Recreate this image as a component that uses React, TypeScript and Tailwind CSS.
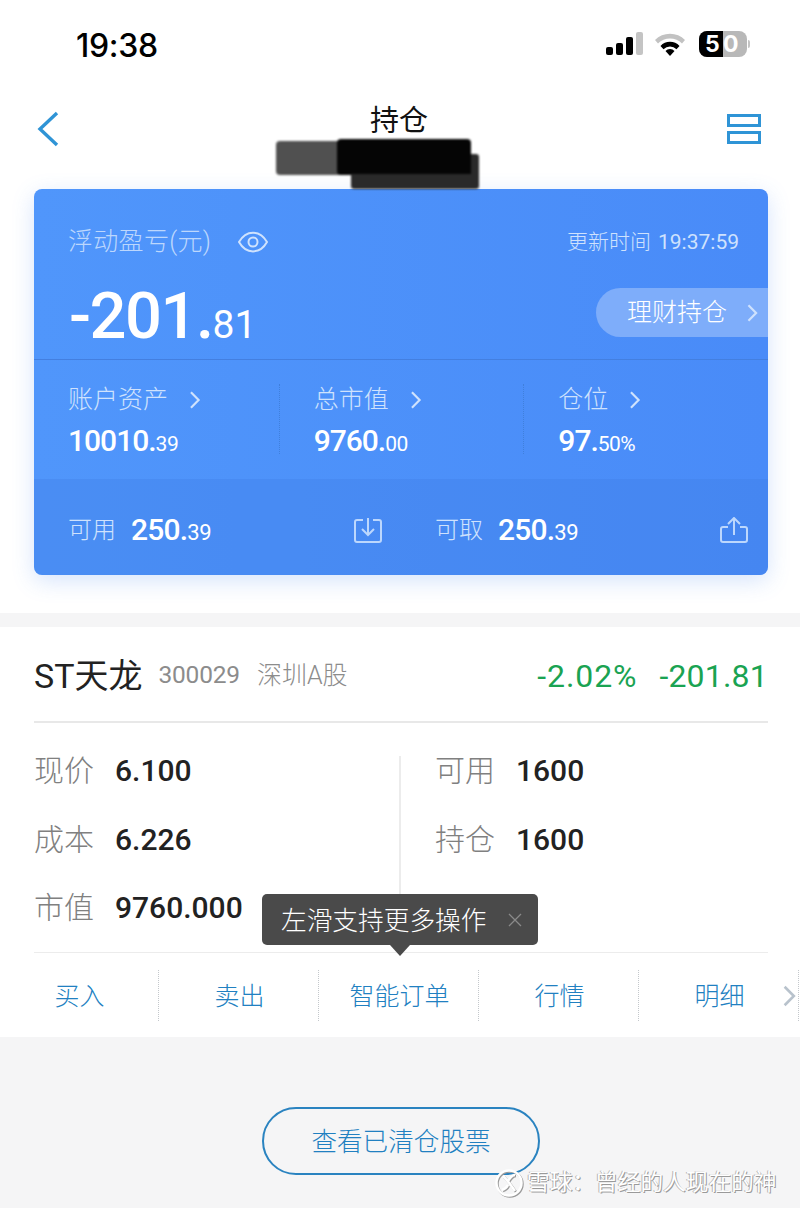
const blueText = 'text-[#2180c1]';

function Chevron({ className }: { className: string }) {
  return (
    <svg viewBox="0 0 12 20" fill="none" stroke="currentColor" strokeWidth="2.4" className={className}>
      <path d="M1.5 1.5 10 10l-8.5 8.5" />
    </svg>
  );
}

function StatusBar() {
  return (
    <div className="flex h-[90px] items-start justify-between pl-[76px] pr-[50px] pt-[27px]">
      <span className="font-['Inter'] text-[32px] font-medium leading-[37px] tracking-[-0.3px] text-black">19:38</span>
      <div className="mt-[4px] flex items-center gap-[10px]">
        <svg width="38" height="24" viewBox="0 0 38 24">
          <rect x="0" y="15" width="7" height="8" rx="2" fill="#000" />
          <rect x="10" y="11" width="7" height="12" rx="2" fill="#000" />
          <rect x="20" y="5" width="7" height="18" rx="2" fill="#000" />
          <rect x="30" y="0" width="7" height="23" rx="2" fill="#c4c4c4" />
        </svg>
        <svg width="32" height="26" viewBox="0 0 32 26">
          <path d="M1 9a21 21 0 0 1 30 0l-3 3.400a17 17 0 0 0-24 0z" fill="#c2c2c2" />
          <path d="M6.500 15a13 13 0 0 1 19 0l-3 3.200a9 9 0 0 0-13 0z" fill="#000" />
          <path d="M11.500 20a6 6 0 0 1 9 0L16 25z" fill="#000" />
        </svg>
        <div className="ml-[3px] flex items-center">
          <div className="flex h-[26px] w-[48px] rounded-[8px] bg-[#b8b8b8] text-[23px] font-bold leading-[26px] text-white">
            <span className="w-[24px] rounded-l-[8px] bg-black pl-[6px] font-['Inter']">5</span>
            <span className="font-['Inter']">0</span>
          </div>
          <div className="ml-[1px] h-[8px] w-[2px] rounded-r bg-[#c4c4c4]" />
        </div>
      </div>
    </div>
  );
}

function NavBar() {
  return (
    <div className="relative flex h-[99px] items-start pl-[37px] pr-[39px]">
      <div className="flex-1">
        <svg width="22" height="36" viewBox="0 0 22 36" fill="none" stroke="#2f94d6" strokeWidth="3.4" className="mt-[21px]">
          <path d="M20 2 3 18l17 16" />
        </svg>
      </div>
      <span className="mt-[12px] text-[29px] leading-[38px] text-[#111]">持仓</span>
      <div className="flex flex-1 justify-end">
        <div className="mt-[24px] flex w-[34px] flex-col gap-[4px]">
          <div className="h-[13px] border-[3.5px] border-[#2f94d6]" />
          <div className="h-[13px] border-[3.5px] border-[#2f94d6]" />
        </div>
      </div>
      {/* 账户名涂抹 */}
      <svg width="206" height="52" viewBox="0 0 206 52" className="absolute left-[275px] top-[48px] blur-[1px]">
        <rect x="1" y="3" width="90" height="34" rx="4" fill="#505050" />
        <rect x="62" y="1" width="134" height="36" rx="4" fill="#050505" />
        <rect x="76" y="16" width="128" height="35" rx="3" fill="#2a2a2a" />
        <rect x="76" y="16" width="120" height="20" fill="#050505" />
      </svg>
    </div>
  );
}

function Amount({ big, small, bigSize, smallSize }: { big: string; small: string; bigSize: string; smallSize: string }) {
  return (
    <span className="font-medium text-white">
      <span className={bigSize}>{big}</span>
      <span className={smallSize}>{small}</span>
    </span>
  );
}

function Stat({ label, big, small, divider }: { label: string; big: string; small: string; divider?: boolean }) {
  return (
    <div className={`h-[70px] pl-[34px] ${divider ? 'border-l border-dotted border-[#3f7fdc]' : ''}`}>
      <div className="flex h-[30px] items-center pt-[2px] text-[25px] font-light leading-[30px] text-[#cfe2fd]">
        <span>{label}</span>
        <Chevron className="ml-[21px] h-[18px] w-[12px] text-[#cfe2fd]" />
      </div>
      <div className="mt-[9px] leading-[36px]">
        <Amount big={big} small={small} bigSize="text-[30px] tracking-[-1px]" smallSize="text-[21px] font-normal tracking-[-0.5px]" />
      </div>
    </div>
  );
}

function Funds({ label, children }: { label: string; children: React.ReactNode }) {
  return (
    <div className="flex items-center justify-between pl-[34px] pr-[20px]">
      <div className="flex items-center gap-[15px]">
        <span className="text-[24px] font-light text-[#cfe2fd]">{label}</span>
        <Amount big="250." small="39" bigSize="text-[30px] tracking-[-0.8px]" smallSize="text-[22px] font-normal tracking-[-0.5px]" />
      </div>
      {children}
    </div>
  );
}

function AccountCard() {
  return (
    <div className="ml-[34px] mr-[32px] overflow-hidden rounded-[8px] bg-gradient-to-r from-[#5096fb] to-[#498bf8] shadow-[0_6px_22px_rgba(70,130,240,0.22)]">
      <div className="h-[171px] border-b border-[#437fe0]">
        <div className="flex h-[68px] items-end justify-between pl-[34px] pr-[29px]">
          <div className="flex h-[30px] items-center">
            <span className="text-[25px] font-light leading-[30px] tracking-[0.3px] text-[#bcd7fd]">浮动盈亏(元)</span>
            <svg width="30" height="22" viewBox="0 0 30 22" fill="none" stroke="#cfe2fd" strokeWidth="2" className="ml-[27px]">
              <path d="M1 11c7-12.500 21-12.500 28 0-7 12.500-21 12.500-28 0z" />
              <circle cx="15" cy="11" r="4.500" />
            </svg>
          </div>
          <div className="flex h-[30px] items-center gap-[7px] font-light leading-[30px] text-[#cfe2fd]">
            <span className="text-[21px]">更新时间</span>
            <span className="text-[21px] font-normal">19:37:59</span>
          </div>
        </div>
        <div className="mt-[31px] flex h-[49px] items-center justify-between">
          <div className="pl-[35px] pt-[8px]">
            <Amount big="-201." small="81" bigSize="text-[65px] tracking-[-1.5px]" smallSize="text-[39px] font-normal" />
          </div>
          <div className="flex h-[49px] w-[172px] items-center rounded-l-full bg-[#7eadfa] pl-[31px]">
            <span className="text-[25px] font-light text-white">理财持仓</span>
            <Chevron className="ml-[20px] h-[18px] w-[11px] text-[#cfe2fd]" />
          </div>
        </div>
      </div>
      <div className="h-[119px] pt-[24px]">
        <div className="grid grid-cols-3">
          <Stat label="账户资产" big="10010." small="39" />
          <Stat label="总市值" big="9760." small="00" divider />
          <Stat label="仓位" big="97." small="50%" divider />
        </div>
      </div>
      <div className="grid h-[96px] grid-cols-2 items-center bg-[#3f7fe4]/35 pt-[5px]">
        <Funds label="可用">
          <svg width="28" height="26" viewBox="0 0 28 26" fill="none" stroke="#bcd7fd" strokeWidth="2" className="mr-[-1px]">
            <path d="M9 3H3a2 2 0 0 0-2 2v18a2 2 0 0 0 2 2h22a2 2 0 0 0 2-2V5a2 2 0 0 0-2-2h-6" />
            <path d="M14 1v16M8 12l6 6 6-6" />
          </svg>
        </Funds>
        <Funds label="可取">
          <svg width="28" height="26" viewBox="0 0 28 26" fill="none" stroke="#bcd7fd" strokeWidth="2">
            <path d="M8 10H3a2 2 0 0 0-2 2v11a2 2 0 0 0 2 2h22a2 2 0 0 0 2-2V12a2 2 0 0 0-2-2h-5" />
            <path d="M14 18V2M8 7l6-6 6 6" />
          </svg>
        </Funds>
      </div>
    </div>
  );
}

function Field({ label, value }: { label: string; value: string }) {
  return (
    <div className="flex h-[68.5px] items-center">
      <span className="w-[81px] text-[30px] font-light leading-[40px] text-[#808080]">{label}</span>
      <span className="text-[30px] font-medium leading-[40px] text-[#222]">{value}</span>
    </div>
  );
}

function ActionCell({ label }: { label: string }) {
  return (
    <div className="flex h-[51px] w-[160px] shrink-0 items-center justify-center border-r border-dotted border-[#c4c8cc] pl-[2px] pt-[2px]">
      <span className={`text-[25px] font-light ${blueText}`}>{label}</span>
    </div>
  );
}

function PositionCard() {
  return (
    <div className="relative bg-white">
      <div className="ml-[34px] mr-[32px] flex h-[96px] items-center justify-between border-b-2 border-[#e8e8e8] pt-[3px]">
        <div className="flex items-center">
          <span className="text-[34px] font-normal leading-[44px] text-[#222]">ST天龙</span>
          <span className="ml-[16px] text-[24.500px] tracking-[-0.2px] text-[#8c8c8c]">300029</span>
          <span className="ml-[17px] text-[25px] font-light text-[#8c8c8c]">深圳A股</span>
        </div>
        <div className="flex gap-[22px] text-[32px] text-[#1aa352]">
          <span className="tracking-[0.9px]">-2.02%</span>
          <span className="tracking-[0.2px]">-201.81</span>
        </div>
      </div>
      <div className="ml-[34px] mr-[32px] grid h-[230px] grid-cols-2 border-b border-[#ececec] pt-[33px]">
        <div className="border-r-2 border-[#ececec]">
          <div className="-mt-[19px]">
            <Field label="现价" value="6.100" />
            <Field label="成本" value="6.226" />
            <Field label="市值" value="9760.000" />
          </div>
        </div>
        <div className="-mt-[19px] pl-[34px]">
          <Field label="可用" value="1600" />
          <Field label="持仓" value="1600" />
        </div>
      </div>
      <div className="-ml-[1px] flex h-[84px] items-center overflow-hidden pt-[1px]">
        <ActionCell label="买入" />
        <ActionCell label="卖出" />
        <ActionCell label="智能订单" />
        <ActionCell label="行情" />
        <ActionCell label="明细" />
      </div>
      <Chevron className="absolute left-[783px] top-[358px] h-[22px] w-[13px] text-[#b8c2cc]" />
      {/* 左滑提示 */}
      <div className="absolute left-[262px] top-[267px] flex h-[51px] w-[276px] items-center rounded-[5px] bg-[#4a4a4a] pl-[19px]">
        <span className="pt-[2px] text-[25.700px] font-light leading-[32px] text-white">左滑支持更多操作</span>
        <svg width="14" height="14" viewBox="0 0 14 14" stroke="#8a8a8a" strokeWidth="1.300" className="ml-[21px]">
          <path d="M1 1l12 12M13 1 1 13" />
        </svg>
        <div className="absolute left-[128px] top-[51px] h-0 w-0 border-x-[10px] border-t-[11px] border-x-transparent border-t-[#4a4a4a]" />
      </div>
    </div>
  );
}

function Watermark() {
  return (
    <div className="absolute left-[494px] top-[1168px] flex items-center whitespace-nowrap">
      <svg width="30" height="30" viewBox="0 0 30 30" fill="none" stroke="#fff" strokeWidth="2.500" className="shrink-0 drop-shadow-[1px_1px_0_#9a9a9a]">
        <circle cx="15" cy="15" r="12.500" />
        <path d="M9 8c4 4 8 9 12 15M21 7c-3 0-5 3-7 6M8 22c3-1 5-3 6-5" />
      </svg>
      <span className="ml-[3px] text-[22.700px] font-normal leading-[30px] text-white [text-shadow:1px_1px_0_#9a9a9a,-1px_0_0_#b5b5b5]">雪球：曾经的人现在的神</span>
    </div>
  );
}

export default function App() {
  return (
    <div className="relative h-[1208px] w-[800px] overflow-hidden bg-[#f5f5f6] font-['Roboto','Noto_Sans_CJK_SC',sans-serif]">
      <div className="h-[613px] bg-white">
        <StatusBar />
        <NavBar />
        <AccountCard />
      </div>
      <div className="mt-[14px]">
        <PositionCard />
      </div>
      <div className="mt-[70px] flex justify-center pl-[2px]">
        <div className={`flex h-[68px] w-[278px] items-center justify-center rounded-full border-2 border-[#2a83c0] pt-[2px] text-[25.600px] font-light ${blueText}`}>
          查看已清仓股票
        </div>
      </div>
      <Watermark />
    </div>
  );
}
